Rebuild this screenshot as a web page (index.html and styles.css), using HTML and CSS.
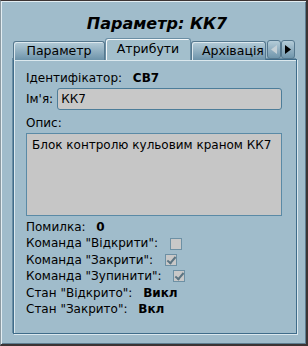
FILE: index.html
```html
<!DOCTYPE html>
<html lang="uk">
<head>
    <meta charset="UTF-8">
    <title>Параметр: КК7</title>
    <link rel="stylesheet" href="styles.css">
</head>
<body>
    <div class="window">
        <h1 class="title">Параметр: КК7</h1>

        <div class="tabs">
            <div class="tab">Параметр</div>
            <div class="tab active">Атрибути</div>
            <div class="tab">Архівація</div>
            <div class="scroll">
                <button class="arrow disabled">
                    <svg width="6" height="9" viewBox="0 0 6 9"><path d="M6 0 L0 4.5 L6 9 Z"/></svg>
                </button>
                <button class="arrow">
                    <svg width="6" height="9" viewBox="0 0 6 9"><path d="M0 0 L6 4.5 L0 9 Z"/></svg>
                </button>
            </div>
        </div>

        <div class="panel">
            <div class="row first">Ідентифікатор: <b>СВ7</b></div>
            <div class="row field">
                <span>Ім'я:</span>
                <div class="input">КК7</div>
            </div>
            <div class="row">Опис:</div>
            <div class="textarea">Блок контролю кульовим краном КК7</div>

            <div class="list">
                <div class="row">Помилка: <b>0</b></div>
                <div class="row">Команда "Відкрити": <span class="check"></span></div>
                <div class="row">Команда "Закрити": <span class="check on"></span></div>
                <div class="row">Команда "Зупинити": <span class="check on"></span></div>
                <div class="row">Стан "Відкрито": <b>Викл</b></div>
                <div class="row">Стан "Закрито": <b>Вкл</b></div>
            </div>
        </div>
    </div>
</body>
</html>
```

FILE: styles.css
```css
* {
    margin: 0;
    padding: 0;
    box-sizing: border-box;
}

body {
    width: 308px;
    height: 346px;
    font-family: "DejaVu Sans", sans-serif;
    font-size: 12px;
    color: #000;
    background: #a0bccb;
    overflow: hidden;
}

.window {
    height: 346px;
    border: 1px solid #3c3434;
    border-left-color: #8c9aa2;
    border-bottom-width: 2px;
    border-right-width: 2px;
    box-shadow: inset 1px 1px 0 #e2edf2, inset -1px -1px 0 #5d7d90;
    padding: 0 9px 10px 12px;
    display: flex;
    flex-direction: column;
}

.title {
    height: 38px;
    padding-top: 14px;
    font-size: 16px;
    line-height: 18px;
    font-weight: bold;
    font-style: italic;
    text-align: center;
    padding-left: 4px;
}

/* tabs */
.tabs {
    display: flex;
    align-items: flex-end;
    height: 21px;
    position: relative;
    z-index: 1;
    margin-bottom: -1px;
}

.tab {
    height: 19px;
    padding: 0 10px;
    line-height: 17px;
    font-size: 12.5px;
    border: 1px solid #56788e;
    border-bottom: none;
    border-radius: 3px 3px 0 0;
    background: linear-gradient(#b4ccd8, #8eadbf 55%, #6d93aa);
    box-shadow: inset 1px 1px 0 #dce8ee;
    text-align: center;
    white-space: nowrap;
}

.tab:nth-child(1) { width: 92px; }
.tab:nth-child(3) { width: 75px; }

.tab.active {
    width: 86px;
    height: 22px;
    line-height: 19px;
    background: #a3bfcc;
    border-color: #6a8ea4;
    box-shadow: inset 1px 1px 0 #f4f8fa;
}

.scroll {
    display: flex;
    margin-left: 1px;
    margin-bottom: 1px;
}

.arrow {
    width: 14px;
    height: 19px;
    border: 1px solid #56788e;
    border-radius: 3px;
    background: linear-gradient(#b4ccd8, #8eadbf 55%, #7096ac);
    display: flex;
    align-items: center;
    justify-content: center;
}

.arrow svg { fill: #000; }
.arrow.disabled svg { fill: #c4d0d6; }

/* panel */
.panel {
    flex: 1;
    border: 1px solid #3f6c8a;
    box-shadow: inset 1px 1px 0 #dbe8ee, 1px 1px 0 #dbe8ee, -1px -1px 0 #6a8ea4;
    padding: 10px 14px 0 12px;
    background: #a0bccb;
}

.row {
    height: 17px;
    line-height: 17px;
    display: flex;
    align-items: center;
    white-space: pre;
}

.row b { margin-left: 7px; }

.field {
    height: 22px;
    margin: 1px 0 5px;
}

.input {
    flex: 1;
    height: 22px;
    margin-left: 4px;
    padding-left: 3px;
    line-height: 20px;
    background: #c8c8c8;
    border: 1px solid #4d7d99;
    border-radius: 3px;
}

.textarea {
    height: 83px;
    margin-top: 1px;
    padding: 3px 5px;
    background: #c6c6c6;
    border: 1px solid #5a8aa6;
    line-height: 17px;
}

.list {
    padding-top: 3px;
}

.list .row {
    height: 16.4px;
    line-height: 16.4px;
}

.check {
    width: 12px;
    height: 12px;
    margin-left: 8px;
    background: #c8c8c8;
    border: 1px solid #6d90a4;
    position: relative;
}

.check.on::after {
    content: "";
    position: absolute;
    left: 3px;
    top: 0;
    width: 3px;
    height: 7px;
    border: solid #5b7482;
    border-width: 0 2px 2px 0;
    transform: rotate(40deg);
}
```
